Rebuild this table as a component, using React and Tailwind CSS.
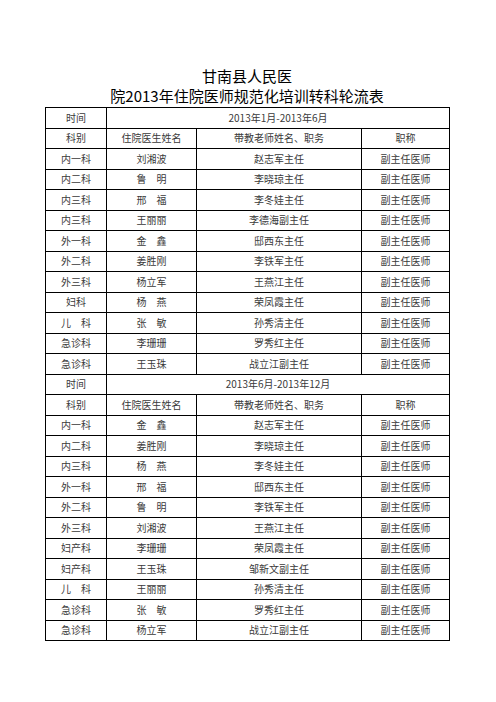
import React from 'react';

const firstHalf = [
    ['内一科', '刘湘波', '赵志军主任'],
    ['内二科', '鲁　明', '李晓琼主任'],
    ['内三科', '邢　福', '李冬娃主任'],
    ['内三科', '王丽丽', '李德海副主任'],
    ['外一科', '金　鑫', '邸西东主任'],
    ['外二科', '姜胜刚', '李铁军主任'],
    ['外三科', '杨立军', '王燕江主任'],
    ['妇科', '杨　燕', '荣凤霞主任'],
    ['儿　科', '张　敏', '孙秀清主任'],
    ['急诊科', '李珊珊', '罗秀红主任'],
    ['急诊科', '王玉珠', '战立江副主任'],
];

const secondHalf = [
    ['内一科', '金　鑫', '赵志军主任'],
    ['内二科', '姜胜刚', '李晓琼主任'],
    ['内三科', '杨　燕', '李冬娃主任'],
    ['外一科', '邢　福', '邸西东主任'],
    ['外二科', '鲁　明', '李铁军主任'],
    ['外三科', '刘湘波', '王燕江主任'],
    ['妇产科', '李珊珊', '荣凤霞主任'],
    ['妇产科', '王玉珠', '邹新文副主任'],
    ['儿　科', '王丽丽', '孙秀清主任'],
    ['急诊科', '张　敏', '罗秀红主任'],
    ['急诊科', '杨立军', '战立江副主任'],
];

const cell = 'border border-black text-center align-middle p-0 leading-none';

const Section = ({ period, rows }) => (
    <>
        <tr className="h-[20.5px]">
            <td className={cell}>时间</td>
            <td className={cell} colSpan={3}>{period}</td>
        </tr>
        <tr className="h-[20.5px]">
            <td className={cell}>科别</td>
            <td className={cell}>住院医生姓名</td>
            <td className={cell}>带教老师姓名、职务</td>
            <td className={cell}>职称</td>
        </tr>
        {rows.map((r, i) => (
            <tr key={i} className="h-[20.5px]">
                <td className={cell}>{r[0]}</td>
                <td className={cell}>{r[1]}</td>
                <td className={cell}>{r[2]}</td>
                <td className={cell}>副主任医师</td>
            </tr>
        ))}
    </>
);

export default function App() {
    return (
        <div className="w-[496px] h-[702px] bg-white font-['Noto_Sans_CJK_SC',sans-serif]">
            <div className="ml-[45px] w-[404px] pt-[66px]">
                <div className="text-center text-[15px] leading-[20px] text-black">
                    <div>甘南县人民医</div>
                    <div>院2013年住院医师规范化培训转科轮流表</div>
                </div>
                <table className="mt-[1px] w-[404px] border-collapse table-fixed text-[10px] text-[#3a3a3a]">
                    <colgroup>
                        <col className="w-[61px]" />
                        <col className="w-[90px]" />
                        <col className="w-[165px]" />
                        <col className="w-[88px]" />
                    </colgroup>
                    <tbody>
                        <Section period="2013年1月-2013年6月" rows={firstHalf} />
                        <Section period="2013年6月-2013年12月" rows={secondHalf} />
                    </tbody>
                </table>
            </div>
        </div>
    );
}
